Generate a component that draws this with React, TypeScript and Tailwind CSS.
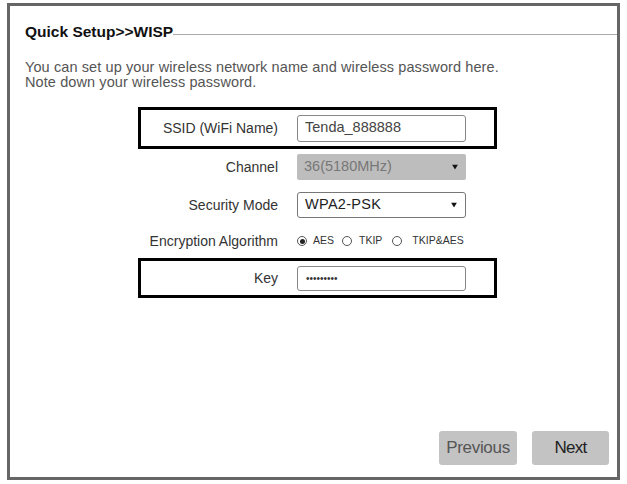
import React from 'react'

const font = { fontFamily: '"Liberation Sans", Arial, sans-serif' }

function Arrow() {
  return (
    <svg width="6" height="5" viewBox="0 0 6 5" className="absolute right-[8px] top-1/2 -translate-y-1/2">
      <path d="M0 0 L6 0 L3 5 Z" fill="#111" />
    </svg>
  )
}

function Radio({ checked }: { checked?: boolean }) {
  return (
    <span className="flex h-[10px] w-[10px] items-center justify-center rounded-full border border-[#555] bg-white">
      {checked && <span className="h-[5px] w-[5px] rounded-full bg-[#222]" />}
    </span>
  )
}

function Row({
  label,
  highlight,
  className,
  children,
}: {
  label: string
  highlight?: boolean
  className: string
  children: React.ReactNode
}) {
  return (
    <div
      className={`ml-[128px] flex w-[359px] items-center border-[3px] ${
        highlight ? 'border-black' : 'border-transparent'
      } ${className}`}
    >
      <div className="w-[137px] whitespace-nowrap text-right text-[14px] text-[#333]">{label}</div>
      <div className="ml-[19px] flex">{children}</div>
    </div>
  )
}

export default function App() {
  return (
    <div className="h-[484px] w-[627px] bg-white pt-[3px]" style={font}>
      <div className="ml-[7px] flex h-[477px] w-[613px] flex-col border-[3px] border-[#666]">
        <div className="mt-[17px] flex items-end pl-[15px]">
          <span className="whitespace-nowrap text-[15.5px] font-bold leading-[18px] text-[#111]">
            Quick Setup&gt;&gt;WISP
          </span>
          <div className="mb-[6px] h-px flex-1 bg-[#aaa]" />
        </div>

        <p className="mt-[19px] pl-[15px] text-[14.5px] leading-[15px] tracking-[0.1px] text-[#555]">
          You can set up your wireless network name and wireless password here.
          <br />
          Note down your wireless password.
        </p>

        <Row label="SSID (WiFi Name)" highlight className="mt-[17px] h-[42px]">
          <div className="flex h-[27px] w-[169px] items-center rounded-[3px] border border-[#888] pl-[7px] text-[14.5px] text-[#444]">
            Tenda_888888
          </div>
        </Row>

        <Row label="Channel" className="mt-[2px] h-[32px]">
          <div className="relative flex h-[26px] w-[169px] items-center rounded-[2px] bg-[#bdbdbd] pl-[7px] text-[14.5px] text-[#777]">
            36(5180MHz)
            <Arrow />
          </div>
        </Row>

        <Row label="Security Mode" className="mt-[6px] h-[32px]">
          <div className="relative flex h-[26px] w-[169px] items-center rounded-[3px] border border-[#777] pl-[7px] text-[14.5px] tracking-[0.3px] text-[#222]">
            WPA2-PSK
            <Arrow />
          </div>
        </Row>

        <Row label="Encryption Algorithm" className="mt-[7px] h-[26px]">
          <div className="flex items-center text-[10.5px] text-[#333]">
            <Radio checked />
            <span className="ml-[6px]">AES</span>
            <span className="ml-[8px]"><Radio /></span>
            <span className="ml-[7px]">TKIP</span>
            <span className="ml-[10px]"><Radio /></span>
            <span className="ml-[10px]">TKIP&amp;AES</span>
          </div>
        </Row>

        <Row label="Key" highlight className="mt-[4px] h-[40px]">
          <div className="flex h-[25px] w-[169px] items-center rounded-[3px] border border-[#888] pl-[8px] text-[10px] text-[#333]">
            •••••••••
          </div>
        </Row>

        <div className="mt-auto flex justify-end gap-[15px] pb-[12px] pr-[8px]">
          <button className="h-[34px] w-[78px] rounded-[3px] bg-[#c3c3c3] text-[17px] tracking-[-0.3px] text-[#555]">
            Previous
          </button>
          <button className="h-[34px] w-[77px] rounded-[3px] bg-[#c3c3c3] text-[17px] tracking-[-0.8px] text-[#222]">
            Next
          </button>
        </div>
      </div>
    </div>
  )
}
